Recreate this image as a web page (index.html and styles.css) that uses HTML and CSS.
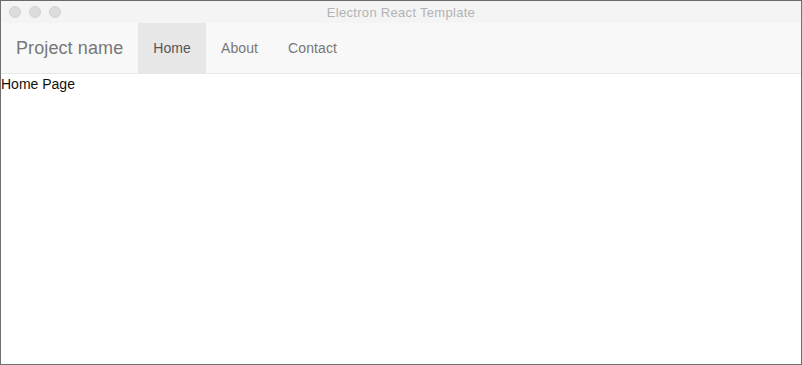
FILE: index.html
```html
<!DOCTYPE html>
<html lang="en">
  <head>
    <meta charset="UTF-8" />
    <meta name="viewport" content="width=device-width, initial-scale=1.0" />
    <title>Electron React Template</title>
    <link rel="stylesheet" href="styles.css">
  </head>
  <body>
    <div class="window">
      <div class="titlebar">
        <div class="lights">
          <span class="light"></span>
          <span class="light"></span>
          <span class="light"></span>
        </div>
        <span class="title">Electron React Template</span>
      </div>
      <nav class="navbar">
        <a class="brand" href="#">Project name</a>
        <ul class="nav">
          <li class="active"><a href="#">Home</a></li>
          <li><a href="#">About</a></li>
          <li><a href="#">Contact</a></li>
        </ul>
      </nav>
      <div class="content">Home Page</div>
    </div>
  </body>
</html>
```

FILE: styles.css
```css
* {
  margin: 0;
  padding: 0;
  box-sizing: border-box;
}
body {
  font-family: "Liberation Sans", Arial, sans-serif;
  font-size: 14px;
  line-height: 20px;
  color: #333;
  background: #fff;
}
.window {
  display: flex;
  flex-direction: column;
  height: 100vh;
  border: 1px solid #707070;
  border-top-color: #6a6a6a;
}
.titlebar {
  position: relative;
  height: 22px;
  background: #f4f4f4;
  display: flex;
  align-items: center;
  justify-content: center;
}
.lights {
  position: absolute;
  left: 8px;
  top: 5px;
  display: flex;
  gap: 8px;
}
.light {
  width: 12px;
  height: 12px;
  border-radius: 50%;
  background: #dcdcdc;
  border: 1px solid #d2d2d2;
}
.title {
  font-size: 13px;
  letter-spacing: 0.3px;
  color: #b3b3b3;
  padding-top: 1px;
}
.navbar {
  display: flex;
  height: 51px;
  background: #f8f8f8;
  border-bottom: 1px solid #e7e7e7;
}
.navbar a {
  text-decoration: none;
  display: block;
}
.brand {
  font-size: 18px;
  line-height: 20px;
  letter-spacing: 0.1px;
  color: #777;
  padding: 15px;
}
.nav {
  display: flex;
  list-style: none;
}
.nav a {
  color: #777;
  padding: 15px;
  line-height: 20px;
  letter-spacing: 0.1px;
}
.nav .active a {
  color: #555;
  background: #e7e7e7;
}
.content {
  flex: 1;
  color: #111;
}
```
